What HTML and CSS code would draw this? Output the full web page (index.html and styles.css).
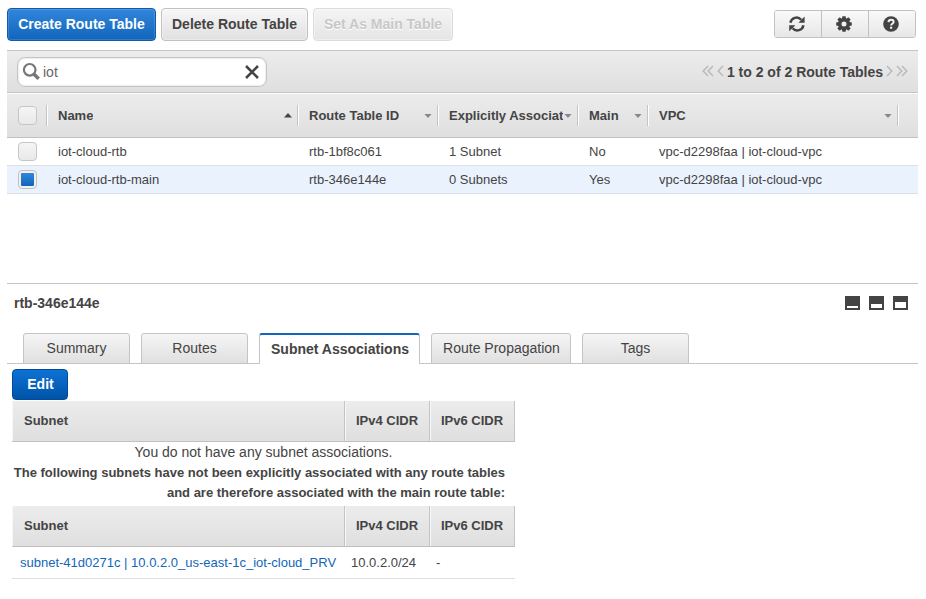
FILE: index.html
```html
<!DOCTYPE html>
<html lang="en">
<head>
<meta charset="utf-8">
<title>Route Tables</title>
<link rel="stylesheet" href="styles.css">
</head>
<body>
<header class="toolbar">
  <button class="btn primary create"><span>Create Route Table</span></button>
  <button class="btn delete"><span>Delete Route Table</span></button>
  <button class="btn disabled" disabled><span>Set As Main Table</span></button>
  <div class="icon-group">
    <button aria-label="Refresh"><svg width="18" height="18" viewBox="0 0 18 18"><path d="M2.4 7.8A6.2 6.2 0 0 1 13.2 4.7M15.4 10.2A6.2 6.2 0 0 1 4.6 13.3" fill="none" stroke="#444" stroke-width="2.4"/><path d="M16.6 1.6V7.8H10.4ZM1.2 16.3V10.2H7.4Z" fill="#444"/></svg></button>
    <button aria-label="Settings"><svg width="16" height="16" viewBox="0 0 16 16"><g fill="#444"><path id="tooth" d="M6.4 .2H9.6L10.2 3.5H5.8Z"/><use href="#tooth" transform="rotate(45 8 8)"/><use href="#tooth" transform="rotate(90 8 8)"/><use href="#tooth" transform="rotate(135 8 8)"/><use href="#tooth" transform="rotate(180 8 8)"/><use href="#tooth" transform="rotate(225 8 8)"/><use href="#tooth" transform="rotate(270 8 8)"/><use href="#tooth" transform="rotate(315 8 8)"/></g><circle cx="8" cy="8" r="4.2" fill="none" stroke="#444" stroke-width="3.4"/></svg></button>
    <button aria-label="Help"><svg width="16" height="16" viewBox="0 0 16 16"><circle cx="8" cy="8" r="7.8" fill="#444"/><path d="M5.4 6.1C5.6 4.4 6.7 3.7 8.1 3.7C9.6 3.7 10.6 4.6 10.6 5.8C10.6 7.7 8.2 7.7 8.1 9.5" fill="none" stroke="#f3f3f3" stroke-width="2"/><path d="M7 10.8H9.2V12.8H7Z" fill="#f3f3f3"/></svg></button>
  </div>
</header>
<section class="filter">
  <div class="search">
    <svg width="19" height="19" viewBox="0 0 19 19"><circle cx="7.7" cy="7.8" r="5.8" fill="none" stroke="#777" stroke-width="2.2"/><path d="M11.8 12L16.7 16.8" stroke="#777" stroke-width="3.6"/></svg>
    <span class="query">iot</span>
    <svg class="clear" width="14" height="14" viewBox="0 0 14 14"><path d="M1 1L13 13M13 1L1 13" stroke="#444" stroke-width="2.5"/></svg>
  </div>
  <div class="pager">
    <svg width="23" height="12" viewBox="0 0 23 12"><path d="M6 1L1.2 6L6 11M11 1L6.2 6L11 11M21 1L16.2 6L21 11"/></svg>
    <span>1 to 2 of 2 Route Tables</span>
    <svg width="23" height="12" viewBox="0 0 23 12"><path d="M2 1L6.8 6L2 11M12 1L16.8 6L12 11M17 1L21.8 6L17 11"/></svg>
  </div>
</section>
<section class="grid">
  <div class="row head">
    <div class="pick"><i class="check"></i></div>
    <div><span>Name</span><i class="arrow up"></i></div>
    <div><span>Route Table ID</span><i class="arrow"></i></div>
    <div><span>Explicitly Associated</span><i class="arrow"></i></div>
    <div><span>Main</span><i class="arrow"></i></div>
    <div><span>VPC</span><i class="arrow"></i></div>
  </div>
  <div class="row">
    <div class="pick"><i class="check"></i></div>
    <div>iot-cloud-rtb</div><div>rtb-1bf8c061</div><div>1 Subnet</div><div>No</div><div>vpc-d2298faa | iot-cloud-vpc</div>
  </div>
  <div class="row selected">
    <div class="pick"><i class="check on"></i></div>
    <div>iot-cloud-rtb-main</div><div>rtb-346e144e</div><div>0 Subnets</div><div>Yes</div><div>vpc-d2298faa | iot-cloud-vpc</div>
  </div>
</section>
<section class="details">
  <div class="title">
    <h2>rtb-346e144e</h2>
    <div class="panes"><i class="pane low"></i><i class="pane mid"></i><i class="pane high"></i></div>
  </div>
  <nav class="tabs">
    <a class="tab">Summary</a>
    <a class="tab">Routes</a>
    <a class="tab active">Subnet Associations</a>
    <a class="tab wide">Route Propagation</a>
    <a class="tab">Tags</a>
  </nav>
  <div class="content">
    <button class="btn edit">Edit</button>
    <div class="subhead"><div>Subnet</div><div>IPv4 CIDR</div><div>IPv6 CIDR</div></div>
    <p class="none">You do not have any subnet associations.</p>
    <p class="note">The following subnets have not been explicitly associated with any route tables<br>and are therefore associated with the main route table:</p>
    <div class="subhead"><div>Subnet</div><div>IPv4 CIDR</div><div>IPv6 CIDR</div></div>
    <div class="subrow"><div><a class="link">subnet-41d0271c | 10.0.2.0_us-east-1c_iot-cloud_PRV</a></div><div>10.0.2.0/24</div><div>-</div></div>
  </div>
</section>
</body>
</html>
```
FILE: styles.css
```css
* { box-sizing: border-box; }
body {
  margin: 0;
  padding: 8px 8px 0 7px;
  height: 599px;
  overflow: hidden;
  background: #fff;
  color: #444;
  font: 13px/20px "Liberation Sans", Arial, sans-serif;
}
button { font: inherit; color: inherit; padding: 0; }
.toolbar { display: flex; gap: 5px; height: 42px; width: 909px; }
.btn {
  height: 33px;
  padding-bottom: 2px;
  border: 1px solid #c1c1c1;
  border-radius: 4px;
  background: linear-gradient(#f7f7f7, #e0e0e0);
  box-shadow: inset 0 0 0 1px rgba(255,255,255,.35);
  font-weight: bold;
  font-size: 14px;
  white-space: nowrap;
}
.create { width: 149px; }
.delete { width: 147px; }
.primary { color: #fff; border-color: #1259a8; background: linear-gradient(#3186dc, #1166bb); box-shadow: inset 0 0 0 1px rgba(255,255,255,.14); }
.disabled { width: 140px; color: #c8c8c8; border-color: #dcdcdc; text-shadow: 0 1px #fff; background: linear-gradient(#f4f4f4, #e5e5e5); }
.icon-group { display: grid; grid-template-columns: 46px 47px 47px; width: 142px; height: 28px; margin: 2px 0 0 auto; border: 1px solid #c1c1c1; border-radius: 3px; overflow: hidden; }
.icon-group button { display: flex; align-items: center; justify-content: center; padding-right: 2px; border: 0; background: linear-gradient(#f9f9f9, #e7e7e7); }
.icon-group button + button { border-left: 1px solid #c1c1c1; }
.filter {
  width: 911px; height: 43px; padding: 0 10px; display: flex; align-items: center; justify-content: space-between;
  border-top: 1px solid #c4c4c4; border-bottom: 1px solid #c4c4c4;
  background: linear-gradient(#ececec, #dfdfdf);
}
.search { width: 250px; height: 30px; display: flex; align-items: center; padding: 0 7px 0 4px; border: 1px solid #c4c4c4; border-radius: 8px; background: #fff; box-shadow: inset 0 0 1px 1px #eee; }
.query { font-size: 14px; color: #666; margin-left: 2px; }
.clear { margin-left: auto; }
.pager { display: flex; align-items: center; font-size: 14px; font-weight: bold; gap: 2px; white-space: nowrap; }
.pager svg { fill: none; stroke: #b9b9b9; stroke-width: 1.5; margin-top: -2px; }
.row { width: 911px; height: 28px; display: grid; grid-template-columns: 41px 250px 140px 140px 70px 250px; align-items: center; border-bottom: 1px solid #dcdfe3; }
.row > div { padding-left: 11px; white-space: nowrap; }
.row > div.pick + div { padding-left: 10px; }
.row > div.pick { display: flex; }
.head { height: 45px; border-top: 1px solid #fff; border-bottom: 1px solid #c1c1c1; background: linear-gradient(#ececec, #dfdfdf); font-weight: bold; }
.head > div { height: 21px; display: flex; align-items: center; justify-content: space-between; background: linear-gradient(90deg, #c4c4c4 50%, #fff 50%) 100% 0 / 2px 100% no-repeat; position: relative; left: 1px; }
.row.head > div { padding-left: 10px; padding-right: 7px; }
.row.head > div.pick { left: 0; padding: 0 0 0 11px; }
.row.head > div.pick + div { padding-left: 9px; }
.head span { overflow: hidden; margin-right: 1px; }
.selected { background: #eaf2fe; }
.check { flex: none; width: 19px; height: 19px; border: 1px solid #c6c6c6; border-radius: 4px; background: linear-gradient(#f5f5f5, #e9e9e9); }
.check.on { border-color: #c1c1c1; background: linear-gradient(#3186dc, #1166bb) content-box, #f0f0f0; padding: 2px; }
.arrow { flex: none; width: 8px; height: 5px; margin-top: 1px; background: #888; clip-path: polygon(0 0, 100% 0, 50% 90%); }
.arrow.up { margin-top: -1px; background: #444; clip-path: polygon(50% 10%, 100% 100%, 0 100%); }
.details { width: 911px; margin-top: 89px; border-top: 1px solid #c4c4c4; }
.title { height: 49px; padding: 0 10px 0 7px; display: flex; justify-content: space-between; align-items: flex-start; }
.title h2 { margin: 9px 0 0; font-size: 14px; line-height: 20px; }
.panes { display: flex; gap: 9px; padding-top: 12px; }
.pane { width: 15px; height: 14px; border: 2px solid #444; background: #fff; }
.pane.low { border-top-width: 10px; }
.pane.mid { border-top-width: 8px; }
.pane.high { border-top-width: 6px; }
.tabs { display: flex; gap: 11px; padding-left: 16px; height: 31px; background: linear-gradient(#c4c4c4, #c4c4c4) 0 100% / 100% 1px no-repeat; font-size: 14px; }
.tab { width: 107px; height: 31px; padding-bottom: 2px; display: flex; justify-content: center; align-items: center; border: 1px solid #c4c4c4; border-radius: 3px 3px 0 0; background: linear-gradient(#f5f5f5, #e0e0e0); white-space: nowrap; }
.tab.active { width: 161px; padding-left: 1px; background: #fff; border-top: 2px solid #1166bb; border-bottom: 0; font-weight: bold; }
.tab.wide { width: 140px; padding-left: 1px; }
.content { width: 508px; padding: 5px 0 0 5px; }
.edit { display: block; width: 56px; height: 31px; padding-left: 1px; color: #fff; border-color: #004b9b; background: linear-gradient(#0d72d5, #0054a7); box-shadow: none; }
.subhead { height: 41px; margin-top: 1px; display: grid; grid-template-columns: 333px 85px 85px; border-bottom: 1px solid #c1c1c1; background: linear-gradient(#ececec, #dfdfdf); font-weight: bold; }
.subhead > div { padding: 10px 0 0 10px; border-left: 1px solid #f7f7f7; border-right: 1px solid #c4c4c4; white-space: nowrap; }
.subhead > div:first-child { padding-left: 11px; }
.none { margin: 0; height: 21px; text-align: center; font-size: 14px; }
.note { margin: 0; padding: 0 10px 0 0; height: 42px; text-align: right; font-weight: bold; white-space: nowrap; }
.subrow { height: 32px; display: grid; grid-template-columns: 331px 85px 87px; align-items: center; border-bottom: 1px solid #dfdfdf; white-space: nowrap; }
.subrow > div { padding-left: 8px; }
.link { color: #1166bb; }
```
